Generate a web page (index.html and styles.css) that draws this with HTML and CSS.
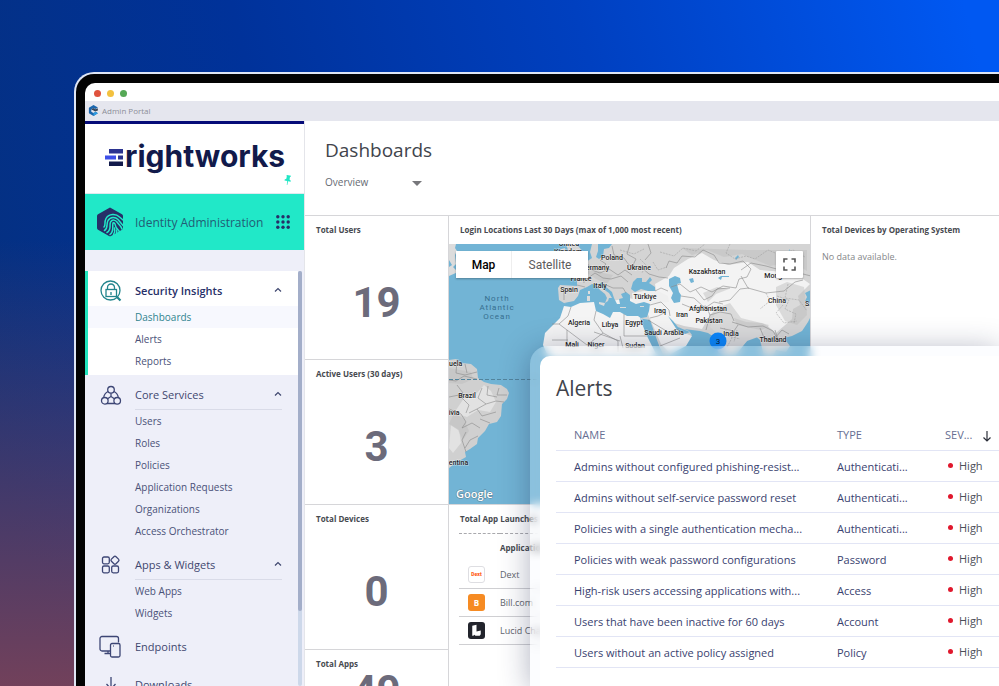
FILE: index.html
```
<!DOCTYPE html>
<html lang="en">
<head>
    <meta charset="UTF-8">
    <meta name="viewport" content="width=device-width, initial-scale=1.0">
    <title>Admin Portal</title>
    <link rel="stylesheet" href="styles.css">
</head>
<body>
    <div class="stage">
        <div class="bezel">
            <div class="window">
                <div class="titlebar">
                    <span class="dot red"></span>
                    <span class="dot yellow"></span>
                    <span class="dot green"></span>
                </div>
                <div class="tabbar">
                    <svg class="tab-icon" viewBox="0 0 10 10">
                        <path d="M5 0l4 2.2-2 1.5L5 2.8 3 4v2.2l2 1 2-1 2 1.2L5 10 .8 7.6V2.4z" fill="#1b66ad"/>
                        <path d="M3 4l2-1.2 2 1 2-.8v2L6.500 6 5 5z" fill="#38475a"/>
                        <path d="M5 7.200l2-1 2 1.200L5 10z" fill="#2f9be0"/>
                    </svg>
                    <span>Admin Portal</span>
                </div>

                <div class="app">
                    <aside class="sidebar">
                        <div class="brand">
                            <div class="logo">
                                <svg class="logo-mark" viewBox="0 0 19 18">
                                    <path d="M4 0h14v4.500H4z" fill="#2b3390"/>
                                    <path d="M0 6.500h11v4H0z" fill="#3d4fe8"/>
                                    <path d="M13 6.500h5v4h-5z" fill="#2b3390"/>
                                    <path d="M4 12.500h14v4.500H4z" fill="#121a4b"/>
                                </svg>
                                <span>rightworks</span>
                            </div>
                            <svg class="pin" viewBox="0 0 8 10">
                                <path d="M3 0l4 .8-.3 1-.7.200-.5 2.500 1.300 1.200-.2 1-2.500-.5L3.300 10l-.5-.1.400-3.900L.500 5.500l.2-1 1.600-.7.500-2.400-.4-.6z" fill="#21e6c5"/>
                            </svg>
                        </div>

                        <div class="product">
                            <svg class="product-icon" viewBox="0 0 28 30">
                                <path d="M14 .500L26 7.300a2 2 0 0 1 1 1.700v12a2 2 0 0 1-1 1.700L15 29a2 2 0 0 1-2 0L2 22.700A2 2 0 0 1 1 21V9a2 2 0 0 1 1-1.700z" fill="#262f68"/>
                                <g fill="none" stroke="#21e8c8" stroke-width="1.500" stroke-linecap="round">
                                    <path d="M8 20c2-2 0-5 2-8.500 3-5 10-5 13.500-1.500L27 13"/>
                                    <path d="M8.500 23.500c4-2.500 1.500-6.500 3.500-10 2.500-4 7.500-3.500 10-1l5 6"/>
                                    <path d="M11 25.500c5-3 2-7 3.500-10.500 2-3 5-2 6.500 0 2 3 4 4 5 7"/>
                                    <path d="M14 27.500c4.500-3.500 2-7.500 3-11.500 2.500-1 2 3 3.500 5s2.500 2.500 3 4"/>
                                    <path d="M17.500 27.500c1.500-2 1.500-4 1-6.500M20.500 26c.4-1 .4-2 0-3"/>
                                </g>
                            </svg>
                            <span class="product-name">Identity Administration</span>
                            <button class="apps-button" aria-label="Switch product">
                                <svg viewBox="0 0 14 14" fill="#262f68">
                                    <circle cx="1.800" cy="1.800" r="1.700"/><circle cx="7" cy="1.800" r="1.700"/><circle cx="12.200" cy="1.800" r="1.700"/>
                                    <circle cx="1.800" cy="7" r="1.700"/><circle cx="7" cy="7" r="1.700"/><circle cx="12.200" cy="7" r="1.700"/>
                                    <circle cx="1.800" cy="12.200" r="1.700"/><circle cx="7" cy="12.200" r="1.700"/><circle cx="12.200" cy="12.200" r="1.700"/>
                                </svg>
                            </button>
                        </div>

                        <div class="nav-wrap">
                            <nav class="nav">
                                <section class="group active">
                                    <button class="group-head">
                                        <svg class="nav-icon teal" viewBox="0 0 24 24">
                                            <circle cx="11.500" cy="11.500" r="9.500"/>
                                            <rect x="7" y="10.500" width="10.500" height="7"/>
                                            <path d="M8.500 10.500V8.500a3.500 3.500 0 0 1 7 0v2M12 13v3"/>
                                            <path d="M18 18l3.500 3.500" stroke-width="2.200"/>
                                        </svg>
                                        <span class="group-name">Security Insights</span>
                                        <svg class="chevron" viewBox="0 0 8 6"><path d="M1 4.500l3-3 3 3"/></svg>
                                    </button>
                                    <a class="item current" href="#">Dashboards</a>
                                    <a class="item" href="#">Alerts</a>
                                    <a class="item" href="#">Reports</a>
                                </section>
                                <section class="group">
                                    <button class="group-head">
                                        <svg class="nav-icon" viewBox="0 0 24 24">
                                            <circle cx="12" cy="6.800" r="3.300"/>
                                            <circle cx="5.800" cy="17.800" r="3.300"/>
                                            <circle cx="18.200" cy="17.800" r="3.300"/>
                                            <path d="M9 8.500c-3 1.500-4 3.500-4.300 6M15 8.500c3 1.500 4 3.500 4.300 6M8 20.500h8M12 10.200v3.300l-3.400 2.300M12 13.500l3.400 2.300"/>
                                        </svg>
                                        <span class="group-name">Core Services</span>
                                        <svg class="chevron" viewBox="0 0 8 6"><path d="M1 4.500l3-3 3 3"/></svg>
                                    </button>
                                    <a class="item" href="#">Users</a>
                                    <a class="item" href="#">Roles</a>
                                    <a class="item" href="#">Policies</a>
                                    <a class="item" href="#">Application Requests</a>
                                    <a class="item" href="#">Organizations</a>
                                    <a class="item" href="#">Access Orchestrator</a>
                                </section>
                                <section class="group">
                                    <button class="group-head">
                                        <svg class="nav-icon" viewBox="0 0 24 24">
                                            <rect x="3.500" y="4" width="6.800" height="6.800" rx="1.500"/>
                                            <rect x="3.500" y="13" width="6.800" height="6.800" rx="1.500"/>
                                            <rect x="12.700" y="13" width="6.800" height="6.800" rx="1.500"/>
                                            <rect x="12.700" y="4" width="6.500" height="6.500" rx="1.500" transform="rotate(45 16 7.250)"/>
                                        </svg>
                                        <span class="group-name">Apps &amp; Widgets</span>
                                        <svg class="chevron" viewBox="0 0 8 6"><path d="M1 4.500l3-3 3 3"/></svg>
                                    </button>
                                    <a class="item" href="#">Web Apps</a>
                                    <a class="item" href="#">Widgets</a>
                                </section>
                                <section class="group">
                                    <a class="group-head plain" href="#">
                                        <svg class="nav-icon" viewBox="0 0 24 24">
                                            <path d="M11 16H3a2 2 0 0 1-2-2V3.500a2 2 0 0 1 2-2h14.500a2 2 0 0 1 2 2v4M9 16v2M5.500 18.500H11"/>
                                            <rect x="11.500" y="8.500" width="9.500" height="13.500" rx="1.500"/>
                                            <path d="M14 11h.7"/>
                                        </svg>
                                        <span class="group-name">Endpoints</span>
                                    </a>
                                </section>
                                <section class="group">
                                    <a class="group-head plain" href="#">
                                        <svg class="nav-icon" viewBox="0 0 24 24">
                                            <path d="M12 4v12M7.500 11l4.500 5 4.500-5M4 15v5h16v-5"/>
                                        </svg>
                                        <span class="group-name">Downloads</span>
                                    </a>
                                </section>
                            </nav>
                            <div class="scroll-track"><div class="scroll-thumb"></div></div>
                        </div>
                    </aside>

                    <main class="main">
                        <header class="page-head">
                            <h1>Dashboards</h1>
                            <div class="picker">
                                <select aria-label="Dashboard">
                                    <option>Overview</option>
                                </select>
                                <span class="caret"></span>
                            </div>
                        </header>

                        <div class="widgets">
                            <section class="stat"><h2>Total Users</h2><p>19</p></section>
                            <section class="stat"><h2>Active Users (30 days)</h2><p>3</p></section>
                            <section class="stat"><h2>Total Devices</h2><p>0</p></section>
                            <section class="stat last"><h2>Total Apps</h2><p>49</p></section>

                            <section class="locations">
                                <h2>Login Locations Last 30 Days (max of 1,000 most recent)</h2>
                                <div class="map">
                                    <svg class="map-canvas" viewBox="449 244 362 260" preserveAspectRatio="xMinYMin slice">
                                        <rect x="449" y="244" width="362" height="260" fill="#72b4d5"/>
                                        <!-- north america and british isles -->
                                        <path d="M449 244h7l-1 4 2 3-2 4 1 9-3 3 3 3 2-1v3l-9 4v-9l3-2-3-5z" fill="#dcdcdc"/>
                                        <path d="M566 244h9l5 4 3 6-4 3-10 1 2-5-3-3zM561 249l4-1 1 5-5 2z" fill="#d5d5d5"/>
                                        <!-- europe and asia -->
                                        <path d="M592 244L590 252 592 258 586 262 580 266 574 269 566 271 572 277 577 280 577 286 560 285 558 288 559 300 564 303 600 312 650 320 664 360 676 350 685 344 692 335 689 331 684 329 700 331 708 333 714 337 718 352 728 358 734 350 746 342 752 333 760 340 764 356 772 358 776 350 786 352 790 346 784 338 792 336 802 331 808 322 811 316V244z" fill="#d4d4d4"/>
                                        <path d="M669 276l5-8 14-9 14-6 12 7 14 5 20-3 12 8 24 2 16 5 10 7-12 12 2 9-7 4-1 10-16 14-11-9-17-1-15-5-13-13-10 10-8 14-18-3-13-4-10-10-22 2-15-8-9 1-3-6 16-3 15 3 14-4-2-13z" fill="#f3f3f3"/>
                                        <path d="M632 293l12-2 14 0 10 5 1 6-14 1-10 1-12-1z" fill="#efefef"/>
                                        <path d="M647 312l7-8 14 9 8 12 8 8 8 3-6 10-15 8-10-10z" fill="#f3f3f3"/>
                                        <path d="M717 308l13-5 11 15 28 7-11 12-11 4-12 15-7-1-8-19-10-9z" fill="#dadada"/>
                                        <!-- mediterranean -->
                                        <path d="M564 303L574 301 578 296 580 290 587 287 592 284 596 285 600 290 605 294 607 298 605 303 608 301 609 298 612 298 609 293 603 289 599 284 602 282 606 287 612 292 614 298 617 304 620 304 619 299 623 298 621 294 626 292 630 295 630 301 636 304 644 302 650 304 649 311 647 317 635 319 600 320z" fill="#72b4d5"/>
                                        <path d="M588 291h2v3h-2zM587 296h3v5h-3zM599 302l6 1-1 3-5-2zM620 307h6v1h-6zM640 306h4v1h-4z" fill="#dcdcdc"/>
                                        <!-- africa -->
                                        <path d="M564 306L571 307 580 303 594 302 596 311 603 314 610 318 613 312 620 312 627 316 638 316 642 319 650 334 658 346V360H552L547 354 543 345 545 333 553 325 560 318z" fill="#f4f4f4"/>
                                        <!-- inland water -->
                                        <path d="M640 318L645 322 653 334 664 356 656 354 646 334zM668 316L673 321 678 327 685 330 690 332 685 334 677 330z" fill="#72b4d5"/>
                                        <path d="M631 289L633 282 637 278 642 278 642 282 646 282 650 277 652 280 649 283 655 287 655 291 648 291 641 289 635 292z" fill="#72b4d5"/>
                                        <path d="M669 279l6-3 5 2 1 5-4 1 2 8 2 3-1 7-6 1-3-5 2-5-4-7z" fill="#72b4d5"/>
                                        <path d="M689 279l4-1 1 4-3 1zM718 278l3-2 8 0v1h-7l-1 3zM598 244h14l-3 4-5 1-1 7-4 3-3-2 2-6zM735 258l3-3 1 2-3 3zM787 253l3-4v4l-2 3zM811 290l-6 3 2 4-2 4 6 3z" fill="#72b4d5"/>
                                        <!-- south america -->
                                        <path d="M449 360l7-1 6 4 9 1 6 5 1 9 6 4 7 2 10 1 6 4 2 4-2 6-5 5-1 12-4 6-8 2-4 7-7 7-1 6-7 5-5 3 1 5-7 4-4-1-2 5-4 3z" fill="#d0d0d0"/>
                                        <path d="M464 398l12-4 8-9 7 6 5 11-6 10-12-2-11 7-13-4zM451 425l8 5 2 13-8 10-4-5z" fill="#e2e2e2"/>
                                        <!-- terrain shade -->
                                        <g fill="#bcbcbc" opacity=".45">
                                            <path d="M776 287l11-5 17 5 1 8 2 20-10 10-12-4-9-16zM734 318l12 4 16 1 7 4-8 3-24-5zM703 293l14-6 12 2-13 5-8 8zM583 270l8-5 12 8 10 2-6 9-11-5zM692 255l15-5 17 7 18-3 28 12 22-4 15 9v-21h-60l-65-2z"/>
                                            <path d="M449 368l22 4 2 7-11 5-13-1zM454 413l10 6 5 12-6 9-5-10-9-6z"/>
                                        </g>
                                        <!-- borders -->
                                        <g fill="none" stroke="#8a8a8a" stroke-width=".6">
                                            <path d="M571 307l-3 9-9 8 28 21 16-12M596 311l-2 9 9 13 15 8v11M624 314v22h23M559 324l-7 0M552 340h16M567 330v16M594 332l26 9M620 336l3 12"/>
                                            <path d="M587 263l5 7 8 3 9-4 9 6 7-5 7 5M600 260l6 4-5 6M612 246l2 9 10 3 5 7 12 2 8 7 10 3 9 1M588 278l7-5 8 5 8 1 10-3 7 6M604 284l9 4 10 0 3 5M577 285l8 2M564 287v13M630 244l-3 10 9 5-4 8M648 244l3 9-6 7M575 268l8 6 1 9"/>
                                            <path d="M666 268l3-7 8 2 5-7 13 1 8-7 11 5 5 8 11 1 13-3 8 8-4 8-8 2-3 9-13-2-11 6-11-5-11 5-10-8-9 3M696 290l8 10 8-4 5-7 13-1M681 296l13 2 11 10 9-6 9 2M741 270l10-7 15 3 14 4 17-1 6 5 8 2M741 276l7 12 18 5 18-2 11-9 8-2M749 288l-9 1-10 11-11 2"/>
                                            <path d="M650 305l11-3 8 8 1 6M650 318l8-2 8-4M660 346l20-8M648 320l20 12 11-3M682 304l10 4 14-2 4 9-4 15M710 315l10-3 11 2 3 7M732 322l16 5 15-1 10 5 5 9M738 325l-4 6-14-3M760 328l5 12 10-2 7-8 7 4M775 330l3 10 8 2M655 291l6-3 7 3"/>
                                            <path d="M457 360l-1 13 9 2 12-3M465 364l2 9M449 380l7 1 8-5 13 3M449 397l10-2 10 10-3 8M449 409l12 5 5 8-4 6M462 428l10-5 8 5M466 432l-4 8 4 12M478 436l-8 4-5 8M482 388l-4 10 8 6M488 386l-1 9 10 2M499 388l-2 7 10 0M486 404l-9 5 5 7 14-4M486 404l10-3 8 1M477 409l-8 4M480 419l10 4M457 385l6 8-4 4"/>
                                        </g>
                                        <g fill="none" stroke="#999" stroke-width=".5" stroke-dasharray="2 1">
                                            <path d="M660 252l14 4 9-8 13 3 9-7M730 244l-4 9 9 6 11-3 9 3 13-9 12 5 13-5 12 7M766 293l4 8-10 8M777 296l12 4-4 9 11 5-2 9M788 284l-3 14 14 2 8 11M783 305l-7 8 8 10 13-2M728 336l12 3M724 328l8 10-5 9M737 330l-3 12M653 262l5 8 9-3M620 250l14 4 10-5M640 259l6 6-4 8"/>
                                        </g>
                                        <path d="M449 379.500h90" stroke="#52849d" stroke-width="1" stroke-dasharray="4 2"/>
                                        <g class="ocean">
                                            <text x="497" y="301">North</text>
                                            <text x="497" y="310">Atlantic</text>
                                            <text x="497" y="319">Ocean</text>
                                        </g>
                                        <g class="countries">
                                            <text x="569" y="246">United</text>
                                            <text x="568" y="254">Kingdom</text>
                                            <text x="612" y="260">Poland</text>
                                            <text x="595" y="270">Germany</text>
                                            <text x="581" y="281">France</text>
                                            <text x="639" y="270">Ukraine</text>
                                            <text x="569" y="292">Spain</text>
                                            <text x="600" y="288">Italy</text>
                                            <text x="645" y="299">Türkiye</text>
                                            <text x="707" y="274">Kazakhstan</text>
                                            <text x="779" y="278">Mongolia</text>
                                            <text x="777" y="303">China</text>
                                            <text x="708" y="311">Afghanistan</text>
                                            <text x="709" y="323">Pakistan</text>
                                            <text x="660" y="313">Iraq</text>
                                            <text x="682" y="317">Iran</text>
                                            <text x="634" y="325">Egypt</text>
                                            <text x="610" y="327">Libya</text>
                                            <text x="579" y="325">Algeria</text>
                                            <text x="664" y="335">Saudi Arabia</text>
                                            <text x="731" y="336">India</text>
                                            <text x="773" y="342">Thailand</text>
                                            <text x="572" y="347">Mali</text>
                                            <text x="596" y="347">Niger</text>
                                            <text x="635" y="348">Sudan</text>
                                            <text x="818" y="306">S. Korea</text>
                                            <text x="446" y="366">Venezuela</text>
                                            <text x="467" y="398">Brazil</text>
                                            <text x="449" y="415">Bolivia</text>
                                            <text x="453" y="465">Argentina</text>
                                        </g>
                                        <circle cx="718" cy="341" r="8.500" fill="#0c86fb"/>
                                        <text class="cluster" x="718" y="344">3</text>
                                        <text class="google" x="456" y="498">Google</text>
                                    </svg>
                                    <div class="map-type">
                                        <button class="selected">Map</button>
                                        <button>Satellite</button>
                                    </div>
                                    <button class="fullscreen" aria-label="Toggle fullscreen">
                                        <svg viewBox="0 0 13 13" fill="none" stroke="#555" stroke-width="1.600">
                                            <path d="M1 4.500V1h3.500M8.500 1H12v3.500M12 8.500V12H8.500M4.500 12H1V8.500"/>
                                        </svg>
                                    </button>
                                </div>
                            </section>

                            <section class="launches">
                                <h2>Total App Launches</h2>
                                <table>
                                    <thead>
                                        <tr><th class="app-icon"></th><th>Application</th></tr>
                                    </thead>
                                    <tbody>
                                        <tr>
                                            <td class="app-icon"><span class="tile dext">Dext</span></td>
                                            <td>Dext</td>
                                        </tr>
                                        <tr>
                                            <td class="app-icon"><span class="tile bill">B</span></td>
                                            <td>Bill.com</td>
                                        </tr>
                                        <tr>
                                            <td class="app-icon">
                                                <span class="tile lucid">
                                                    <svg viewBox="0 0 16 16"><path d="M4 3.500l4-1V9l4-1v3.500l-1 1.500H7l-1-1-1 1H4z" fill="#fff"/></svg>
                                                </span>
                                            </td>
                                            <td>Lucid Chart</td>
                                        </tr>
                                    </tbody>
                                </table>
                            </section>

                            <section class="devices">
                                <h2>Total Devices by Operating System</h2>
                                <p>No data available.</p>
                            </section>
                        </div>
                    </main>
                </div>
            </div>
        </div>

        <!-- Alerts card floats over the window -->
        <div class="glass">
            <section class="alerts">
                <h1>Alerts</h1>
                <table>
                    <thead>
                        <tr>
                            <th class="name">Name</th>
                            <th class="type">Type</th>
                            <th class="severity">
                                <span>Sev...</span>
                                <svg viewBox="0 0 10 12"><path d="M5 1v10M1.500 7.500L5 11l3.500-3.500"/></svg>
                            </th>
                        </tr>
                    </thead>
                    <tbody>
                        <tr><td class="name">Admins without configured phishing-resist...</td><td>Authenticati...</td><td class="high">High</td></tr>
                        <tr><td class="name">Admins without self-service password reset</td><td>Authenticati...</td><td class="high">High</td></tr>
                        <tr><td class="name">Policies with a single authentication mecha...</td><td>Authenticati...</td><td class="high">High</td></tr>
                        <tr><td class="name">Policies with weak password configurations</td><td>Password</td><td class="high">High</td></tr>
                        <tr><td class="name">High-risk users accessing applications with...</td><td>Access</td><td class="high">High</td></tr>
                        <tr><td class="name">Users that have been inactive for 60 days</td><td>Account</td><td class="high">High</td></tr>
                        <tr><td class="name">Users without an active policy assigned</td><td>Policy</td><td class="high">High</td></tr>
                    </tbody>
                </table>
            </section>
        </div>
    </div>
</body>
</html>
```
FILE: styles.css
```
* {
    box-sizing: border-box;
}

body {
    margin: 0;
    font-family: "Open Sans", "Noto Sans", sans-serif;
    color: #3f4254;
}

h1, h2, p {
    margin: 0;
}

button {
    font-family: inherit;
    border: none;
    padding: 0;
    background: none;
    cursor: pointer;
}

a {
    text-decoration: none;
}

table {
    border-collapse: collapse;
    width: 100%;
}

.stage {
    position: relative;
    display: flex;
    height: 100vh;
    overflow: hidden;
    padding: 72px 0 0 74px;
    background:
        linear-gradient(to bottom, rgba(122, 66, 88, 0) 35%, rgba(122, 66, 88, 1) 105%),
        linear-gradient(75deg, #05307f 5%, #00329a 35%, #0040c0 64%, #0058f2 97%);
}

/* laptop frame */
.bezel {
    flex: 1;
    display: flex;
    min-width: 0;
    padding: 9px 0 0 9px;
    background: #030303;
    border: 2px solid #dfe6f5;
    border-width: 2px 0 0 2px;
    border-top-left-radius: 20px;
}

.window {
    flex: 1;
    display: flex;
    flex-direction: column;
    min-width: 0;
    overflow: hidden;
    background: white;
    border-top-left-radius: 10px;
}

.titlebar {
    display: flex;
    align-items: center;
    gap: 6px;
    height: 18px;
    padding: 2px 0 0 9px;
    flex-shrink: 0;
}

.dot {
    width: 7px;
    height: 7px;
    border-radius: 50%;
}

.red { background: #e0533d; }
.yellow { background: #f3c13f; }
.green { background: #55a856; }

.tabbar {
    display: flex;
    align-items: center;
    gap: 3px;
    height: 20px;
    padding: 0 0 2px 3px;
    flex-shrink: 0;
    background: #e5e6ee;
    color: #8c8e98;
    font-size: 8px;
}

.tab-icon {
    width: 11px;
    height: 11px;
}

.app {
    flex: 1;
    display: flex;
    min-height: 0;
}

/* sidebar */
.sidebar {
    width: 219px;
    flex-shrink: 0;
    display: flex;
    flex-direction: column;
    background: #eeeff9;
    border-top: 3px solid #050b78;
}

.brand {
    height: 70px;
    flex-shrink: 0;
    padding: 13px 8px 0 20px;
    background: white;
    border-bottom: 1px solid #dfe9ef;
}

.logo {
    display: flex;
    align-items: center;
    gap: 1px;
    height: 38px;
    color: #121a4b;
    font-family: Inter, "Liberation Sans", sans-serif;
    font-size: 30px;
    font-weight: 700;
}

.logo-mark {
    width: 19px;
    height: 18px;
    margin-top: 4px;
}

.pin {
    display: block;
    width: 8px;
    height: 10px;
    margin-left: auto;
    margin-right: 4px;
}

.product {
    display: flex;
    align-items: center;
    height: 56px;
    flex-shrink: 0;
    padding: 0 14px 0 11px;
    background: #21e8c8;
    color: #215d75;
    font-size: 12px;
}

.product-icon {
    width: 28px;
    height: 30px;
}

.product-name {
    flex: 1;
    padding-left: 11px;
    white-space: nowrap;
}

.apps-button {
    width: 14px;
    height: 14px;
}

.apps-button svg {
    display: block;
}

.nav-wrap {
    flex: 1;
    display: flex;
    min-height: 0;
    padding: 21px 2px 0 0;
}

.nav {
    flex: 1;
    overflow: hidden;
}

.scroll-track {
    width: 4px;
    background: #cdd8ea;
    border-radius: 2px;
}

.scroll-thumb {
    height: 82%;
    background: #a3aec9;
    border-radius: 2px;
}

.group {
    padding-bottom: 3px;
    border-left: 3px solid transparent;
}

.group.active {
    background: white;
    border-left-color: #21e3bd;
}

.group-head {
    display: flex;
    align-items: center;
    width: 100%;
    height: 35px;
    padding: 4px 16px 0 11px;
    color: #3f476f;
    font-size: 11px;
    text-align: left;
}

.group-name {
    flex: 1;
    display: flex;
    align-items: center;
    height: 31px;
    margin-left: 12px;
    border-bottom: 1px solid #d9dbe8;
}

.chevron {
    width: 8px;
    height: 31px;
    border-bottom: 1px solid #d9dbe8;
    fill: none;
    stroke: #3f476f;
    stroke-width: 1.2;
}

.active .group-name,
.active .chevron,
.plain .group-name {
    border-color: transparent;
}

.active .group-head {
    color: #262f68;
    font-weight: 600;
}

.nav-icon {
    width: 24px;
    height: 24px;
    fill: none;
    stroke: #3d4675;
    stroke-width: 1.3;
}

.nav-icon.teal {
    stroke: #22858d;
}

.item {
    display: block;
    height: 22px;
    padding-left: 47px;
    color: #4a5178;
    font-size: 10px;
    line-height: 22px;
}

.item.current {
    background: #f7f8fe;
    color: #31848f;
}

/* main area */
.main {
    flex: 1;
    display: flex;
    flex-direction: column;
    min-width: 0;
    border-left: 1px solid #e4e5ea;
}

.page-head {
    height: 94px;
    flex-shrink: 0;
    padding: 15px 20px 0;
}

.page-head h1,
.alerts h1 {
    color: #41444c;
    font-size: 19px;
    font-weight: 400;
    line-height: 28px;
}

.alerts h1 {
    font-size: 21px;
}

.picker {
    position: relative;
    width: 98px;
    margin-top: 5px;
}

.picker select {
    appearance: none;
    width: 100%;
    height: 20px;
    padding: 0;
    border: none;
    background: none;
    color: #666a73;
    font-family: inherit;
    font-size: 10px;
}

.caret {
    position: absolute;
    right: 1px;
    top: 12px;
    border: 5px solid transparent;
    border-top-color: #77777b;
    border-bottom: none;
    pointer-events: none;
}

.widgets {
    flex: 1;
    display: grid;
    grid-template-columns: 144px 362px 1fr;
    grid-template-rows: 144px 145px 145px 145px;
    min-height: 0;
    border-top: 1px solid #d6d6d9;
}

.widgets > section {
    border-right: 1px solid #d6d6d9;
    border-bottom: 1px solid #d6d6d9;
}

.widgets h2 {
    padding: 7px 11px 0;
    color: #474a50;
    font-size: 8px;
    font-weight: 700;
    line-height: 13px;
    white-space: nowrap;
}

.stat {
    grid-column: 1;
}

.stat p {
    padding-top: 39px;
    color: #6c6b7b;
    font-family: Roboto, sans-serif;
    font-size: 42px;
    font-weight: 700;
    line-height: 56px;
    text-align: center;
}

.stat.last p {
    padding-top: 0;
    line-height: 42px;
}

.locations {
    grid-column: 2;
    grid-row: 1 / span 2;
    display: flex;
    flex-direction: column;
}

.map {
    position: relative;
    flex: 1;
    min-height: 0;
    margin-top: 8px;
    overflow: hidden;
}

.map-canvas {
    display: block;
    width: 100%;
    height: 100%;
}

.countries {
    fill: #1f1f1f;
    stroke: white;
    stroke-width: 1px;
    stroke-opacity: .5;
    paint-order: stroke;
    font-family: Roboto, sans-serif;
    font-size: 7px;
    font-weight: 500;
    text-anchor: middle;
}

.ocean {
    fill: #376f8f;
    font-family: Roboto, sans-serif;
    font-size: 8px;
    letter-spacing: 1px;
    text-anchor: middle;
}

.cluster {
    fill: #08203c;
    font-family: Roboto, sans-serif;
    font-size: 8px;
    text-anchor: middle;
}

.google {
    fill: white;
    stroke: #5b7f92;
    stroke-width: 1px;
    paint-order: stroke;
    font-family: "Open Sans", sans-serif;
    font-size: 11px;
    font-weight: 600;
}

.map-type {
    position: absolute;
    top: 7px;
    left: 7px;
    display: flex;
    height: 27px;
    background: white;
    box-shadow: 0 1px 2px rgba(0, 0, 0, .3);
}

.map-type button {
    width: 76px;
    color: #5c5c5c;
    font-family: Roboto, sans-serif;
    font-size: 12px;
}

.map-type .selected {
    width: 56px;
    color: black;
    font-weight: 500;
    border-right: 1px solid #eee;
}

.fullscreen {
    position: absolute;
    top: 7px;
    right: 7px;
    width: 27px;
    height: 27px;
    padding: 7px;
    background: white;
    border-radius: 1px;
    box-shadow: 0 1px 2px rgba(0, 0, 0, .3);
}

.fullscreen svg {
    display: block;
}

.launches {
    grid-column: 2;
    grid-row: 3 / span 2;
}

.launches table {
    width: calc(100% - 20px);
    margin: 8px 10px 0;
    border-top: 1px dashed #a9a9ad;
    color: #62656d;
    font-size: 9px;
}

.launches th {
    height: 27px;
    padding: 0;
    color: #474a50;
    font-size: 8px;
    text-align: left;
}

.launches td {
    height: 28px;
    padding: 0;
    border-bottom: 1px solid #cfcfd2;
}

.launches .app-icon {
    width: 41px;
    padding-left: 9px;
}

.tile {
    display: flex;
    align-items: center;
    justify-content: center;
    width: 17px;
    height: 17px;
    border-radius: 3px;
    color: white;
    font-size: 8px;
    font-weight: 700;
}

.tile.dext {
    border: 1px solid #dedee2;
    color: #ff5a14;
    font-family: Roboto, sans-serif;
    font-size: 5px;
    font-weight: 900;
}

.tile.bill { background: #f68b23; }
.tile.lucid { background: #22242c; }

.widgets > .devices {
    grid-column: 3;
    grid-row: 1 / span 4;
    border-right: none;
}

.devices p {
    padding: 14px 11px 0;
    color: #858789;
    font-size: 9px;
    line-height: 13px;
}

/* alerts card */
.glass {
    position: absolute;
    top: 346px;
    left: 530px;
    right: 0;
    bottom: 0;
    display: flex;
    padding: 10px 0 0 10px;
    border-top-left-radius: 18px;
    background: rgba(238, 243, 255, .2);
    backdrop-filter: blur(5px);
    box-shadow: 0 4px 30px rgba(20, 30, 70, .34);
}

.alerts {
    flex: 1;
    padding: 18px 0 0 16px;
    overflow: hidden;
    background: white;
    border-top-left-radius: 10px;
}

.alerts table {
    margin-top: 17px;
    table-layout: fixed;
    color: #39426f;
    font-size: 11px;
}

.alerts tr {
    height: 31px;
    border-bottom: 1px solid #e2e5f5;
}

.alerts th,
.alerts td {
    padding: 1px 0 0;
    text-align: left;
    white-space: nowrap;
}

.alerts th {
    padding-top: 0;
    color: #666e92;
    font-size: 11px;
    font-weight: 500;
    text-transform: uppercase;
}

.alerts .name {
    width: 281px;
    padding-left: 18px;
}

.alerts .type {
    width: 108px;
}

.severity svg {
    width: 10px;
    height: 12px;
    margin-left: 7px;
    vertical-align: middle;
    fill: none;
    stroke: #2c2f3a;
    stroke-width: 1.2;
}

.alerts .high {
    padding-top: 0;
    color: #4c4f59;
}

.high::before {
    content: "";
    display: inline-block;
    width: 5px;
    height: 5px;
    margin: 0 6px 2px 3px;
    border-radius: 50%;
    background: #e0182d;
}
```
